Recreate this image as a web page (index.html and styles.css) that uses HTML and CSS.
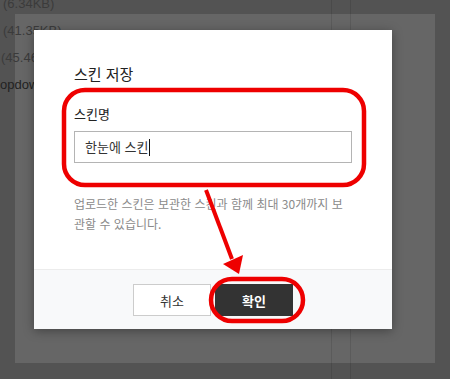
FILE: index.html
```html
<!DOCTYPE html>
<html lang="ko">
<head>
<meta charset="utf-8">
<title>스킨 저장</title>
<link rel="stylesheet" href="styles.css">
</head>
<body>
<div class="screen">
  <div class="panel"></div>
  <div class="vline vline-a"></div>
  <div class="vline vline-b"></div>
  <ul class="files">
    <li class="file file-a">(6.34KB)</li>
    <li class="file file-a">(41.35KB)</li>
    <li class="file file-b">(45.46KB)</li>
    <li class="file file-c">opdown</li>
  </ul>

  <div class="modal">
    <div class="modal-body">
      <h2 class="modal-title">스킨 저장</h2>
      <label class="field-label" for="skin-name">스킨명</label>
      <div class="field-input" id="skin-name">한눈에 스킨<span class="caret"></span></div>
      <p class="field-help">업로드한 스킨은 보관한 스킨과 함께 최대 30개까지 보관할 수 있습니다.</p>
    </div>
    <div class="modal-footer">
      <button class="btn btn-cancel" type="button">취소</button>
      <button class="btn btn-ok" type="button">확인</button>
    </div>
  </div>

  <svg class="marks" width="450" height="379" viewBox="0 0 450 379">
    <rect x="64" y="90" width="300" height="95" rx="21" ry="21" fill="none" stroke="#ee0000" stroke-width="4.5"/>
    <rect x="211" y="279" width="92" height="42" rx="21" ry="21" fill="none" stroke="#ee0000" stroke-width="4.5"/>
    <line x1="206" y1="190" x2="232" y2="259" stroke="#ee0000" stroke-width="4"/>
    <polygon points="239,274 223,264 243,255" fill="#ee0000"/>
  </svg>
</div>
</body>
</html>
```

FILE: styles.css
```css
* { box-sizing: border-box; }

html, body {
  margin: 0;
  padding: 0;
}

body {
  width: 450px;
  height: 379px;
  overflow: hidden;
  background: #545454;
  font-family: "Noto Sans CJK KR", "Noto Sans", sans-serif;
}

.screen {
  position: relative;
  width: 450px;
  height: 379px;
  overflow: hidden;
  background: #535353;
}

.panel {
  position: absolute;
  left: 15px;
  top: 14px;
  width: 420px;
  height: 349px;
  background: #666666;
}

.vline {
  position: absolute;
  top: 0;
  bottom: 0;
  width: 1px;
  background: rgba(0, 0, 0, 0.1);
}
.vline-a { left: 331px; }
.vline-b { left: 350px; }

.files {
  position: relative;
  list-style: none;
  margin: -10px 0 0 0;
  padding: 0;
  font-family: "Liberation Sans", "Noto Sans CJK KR", sans-serif;
  font-size: 13px;
  line-height: 27px;
  color: #3b3b3b;
}
.file-a { padding-left: 3px; }
.file-b { padding-left: 1px; }
.file-c { padding-left: 0; color: #222; }

.modal {
  position: absolute;
  left: 34px;
  top: 30px;
  width: 358px;
  height: 299px;
  background: #ffffff;
  box-shadow: 0 2px 10px rgba(0, 0, 0, 0.35);
  display: flex;
  flex-direction: column;
}

.modal-body {
  flex: 1;
  padding: 33px 40px 0;
}

.modal-title {
  margin: 0;
  font-size: 15px;
  line-height: 22px;
  font-weight: 400;
  color: #222;
}

.field-label {
  display: block;
  margin-top: 19px;
  font-size: 13px;
  line-height: 20px;
  color: #222;
}

.field-input {
  margin-top: 7px;
  height: 32px;
  border: 1px solid #b4b4b4;
  padding: 0 10px;
  font-size: 13px;
  line-height: 30px;
  color: #333;
  display: flex;
  align-items: center;
}

.caret {
  display: inline-block;
  width: 1px;
  height: 17px;
  background: #111;
  margin-left: 1px;
}

.field-help {
  margin: 31px 0 0;
  font-size: 12px;
  line-height: 20px;
  color: #8a8a8a;
}

.modal-footer {
  border-top: 1px solid #ececec;
  background: #f8f9fa;
  padding: 14px 0 13px;
  display: flex;
  justify-content: center;
  gap: 4px;
}

.btn {
  width: 78px;
  height: 32px;
  font-family: "Noto Sans CJK KR", "Noto Sans", sans-serif;
  font-size: 13px;
  padding: 0;
  cursor: pointer;
}

.btn-cancel {
  background: #fff;
  border: 1px solid #cccccc;
  color: #333;
}

.btn-ok {
  background: #333333;
  border: 1px solid #333333;
  color: #fff;
  font-weight: 700;
}

.marks {
  position: absolute;
  left: 0;
  top: 0;
  pointer-events: none;
}
```
